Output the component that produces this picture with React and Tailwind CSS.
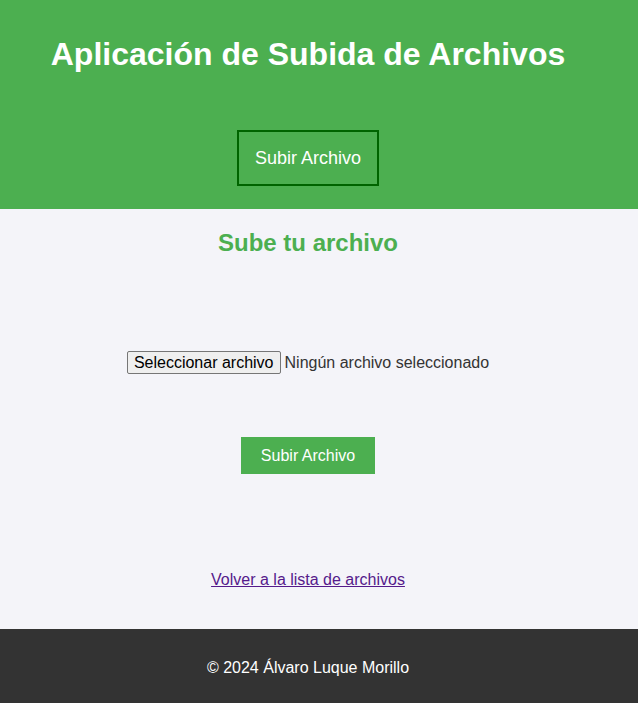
export default function App() {
  return (
    <div className="min-h-[703px] bg-[#f4f4f9] font-['Liberation_Sans',Arial,sans-serif] text-[#333]">
      <header className="bg-[#4caf50] pb-[23px] pr-[22px] pt-[36px] text-center text-white">
        <h1 className="text-[32px] font-bold leading-[37px]">
          Aplicación de Subida de Archivos
        </h1>
        <button
          type="button"
          className="mt-[57px] h-[56px] border-2 border-[#006400] px-[16px] text-[18px] leading-[21px] text-white"
        >
          Subir Archivo
        </button>
      </header>

      <main className="pb-[37px] pr-[22px] pt-[20px] text-center">
        <h2 className="text-[24px] font-bold leading-[28px] text-[#4caf50]">
          Sube tu archivo
        </h2>

        <form className="mt-[94px] flex flex-col items-center">
          <div className="flex h-[23px] items-center text-[16px]">
            <span className="flex h-[23px] items-center rounded-[2px] border border-[#767676] bg-[#efefef] px-[6px] text-black">
              Seleccionar archivo
            </span>
            <span className="ml-[4px] text-[#333]">Ningún archivo seleccionado</span>
          </div>

          <button
            type="submit"
            className="mt-[63px] h-[37px] w-[134px] bg-[#4caf50] text-[16px] text-white"
          >
            Subir Archivo
          </button>
        </form>

        <a
          href="#"
          className="mt-[97px] inline-block text-[16px] leading-[18px] text-[#551a8b] underline"
        >
          Volver a la lista de archivos
        </a>
      </main>

      <footer className="flex h-[74px] items-center justify-center bg-[#333] pr-[22px] pt-[3px] text-[16px] text-white">
        © 2024 Álvaro Luque Morillo
      </footer>
    </div>
  )
}
